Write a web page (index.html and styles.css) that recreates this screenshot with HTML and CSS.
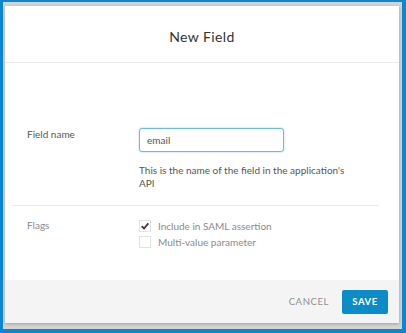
FILE: index.html
```html
<!DOCTYPE html>
<html lang="en">
<head>
    <meta charset="UTF-8">
    <title>New Field</title>
    <link rel="stylesheet" href="styles.css">
</head>
<body>
    <div class="backdrop">
        <div class="modal">
            <div class="modal-header">
                <h3>New Field</h3>
            </div>

            <div class="modal-body">
                <div class="form-row">
                    <label class="row-label" for="field-name">Field name</label>
                    <div class="row-control">
                        <input id="field-name" class="text-input" type="text" value="email">
                        <p class="helper">This is the name of the field in the application's API</p>
                    </div>
                </div>

                <div class="form-row flags-row">
                    <span class="row-label">Flags</span>
                    <div class="row-control">
                        <label class="check">
                            <span class="box checked">
                                <svg width="12" height="12" viewBox="0 0 12 12"><path d="M2 6.2 L4.8 9 L10 2.8" fill="none" stroke="#3a3a3a" stroke-width="2.2"/></svg>
                            </span>
                            Include in SAML assertion
                        </label>
                        <label class="check">
                            <span class="box"></span>
                            Multi-value parameter
                        </label>
                    </div>
                </div>
            </div>

            <div class="modal-footer">
                <button class="btn btn-link">Cancel</button>
                <button class="btn btn-primary">Save</button>
            </div>
        </div>
    </div>
</body>
</html>
```

FILE: styles.css
```css
:root {
    --frame-blue: #0b86d1;
    --primary: #0a8cc8;
    --text: #565656;
    --title: #333;
    --line: #eaeaea;
}

* {
    margin: 0;
    padding: 0;
    box-sizing: border-box;
}

body {
    font-family: Lato, "Open Sans", sans-serif;
    background: var(--frame-blue);
    width: 406px;
    height: 333px;
    overflow: hidden;
    padding: 2px 4px 4px 3px;
}

.backdrop {
    background: #d4d4d4;
    height: 327px;
    padding: 4px 3px 6px 2px;
}

.modal {
    background: #fff;
    height: 317px;
    display: flex;
    flex-direction: column;
    box-shadow: 0 1px 3px rgba(0, 0, 0, 0.25);
}

.modal-header {
    height: 57px;
    border-bottom: 1px solid var(--line);
    display: flex;
    align-items: center;
    justify-content: center;
    padding-top: 4px;
}

.modal-header h3 {
    font-weight: 400;
    font-size: 14px;
    color: var(--title);
    letter-spacing: 0.4px;
}

.modal-body {
    flex: 1;
    padding: 0 20px 0 7px;
}

.form-row {
    display: flex;
    padding: 65px 0 15px 15px;
    border-bottom: 1px solid var(--line);
}

.row-label {
    width: 112px;
    font-size: 10px;
    color: var(--text);
}

.row-control {
    display: flex;
    flex-direction: column;
}

.text-input {
    width: 145px;
    height: 24px;
    border: 1px solid #6cbde3;
    border-radius: 3px;
    box-shadow: 0 0 2px rgba(80, 170, 220, 0.6);
    padding: 0 7px;
    font-family: inherit;
    font-size: 10px;
    color: #555;
    outline: none;
}

.helper {
    width: 215px;
    margin-top: 12px;
    font-size: 10px;
    line-height: 13px;
    color: var(--text);
}

.flags-row {
    border-bottom: none;
    padding-top: 12px;
}

.flags-row .row-label {
    color: #8a8a8a;
    padding-top: 1px;
}

.check {
    display: flex;
    align-items: center;
    gap: 7px;
    height: 16px;
    font-size: 10px;
    color: #8a8a8a;
}

.box {
    width: 12px;
    height: 12px;
    border: 1px solid #e3e3e3;
    display: flex;
    align-items: center;
    justify-content: center;
}

.box.checked svg {
    display: block;
}

.modal-footer {
    height: 43px;
    background: #f4f4f4;
    display: flex;
    align-items: center;
    justify-content: flex-end;
    gap: 13px;
    padding-right: 11px;
}

.btn {
    font-family: inherit;
    font-size: 9.5px;
    text-transform: uppercase;
    letter-spacing: 0.6px;
    border: none;
    cursor: pointer;
}

.btn-link {
    background: none;
    color: #8f8f8f;
    font-weight: 400;
}

.btn-primary {
    background: var(--primary);
    color: #fff;
    width: 46px;
    height: 24px;
    border-radius: 2px;
    font-weight: 700;
}
```
